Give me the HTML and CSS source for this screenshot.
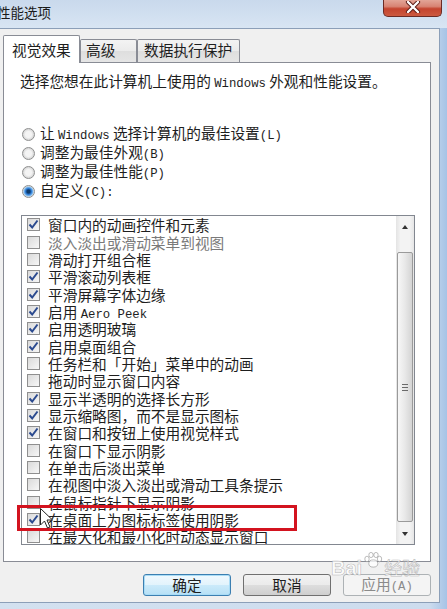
FILE: index.html
```html
<!DOCTYPE html>
<html lang="zh-CN">
<head>
  <meta charset="UTF-8" />
  <title>性能选项</title>
  <link rel="stylesheet" href="styles.css">
</head>
<body>
  <div class="window">
    <div class="titlebar">
      <span class="title">性能选项</span>
      <button class="close-btn" aria-label="关闭">
        <svg width="16" height="12" viewBox="0 0 16 12">
          <path d="M3 1 L13 11 M13 1 L3 11" stroke="#5a1a14" stroke-width="4.2" stroke-linecap="round"/>
          <path d="M3 1 L13 11 M13 1 L3 11" stroke="#fff" stroke-width="2.4" stroke-linecap="round"/>
        </svg>
      </button>
    </div>

    <div class="client">
      <div class="tabs">
        <div class="tab active">视觉效果</div>
        <div class="tab tab-adv">高级</div>
        <div class="tab tab-dep">数据执行保护</div>
      </div>

      <div class="panel">
        <p class="intro">选择您想在此计算机上使用的 <span class="en">Windows</span> 外观和性能设置。</p>

        <div class="radios">
          <label class="radio"><span class="radio-dot"></span><span class="label">让 <span class="en">Windows</span> 选择计算机的最佳设置<span class="en">(L)</span></span></label>
          <label class="radio"><span class="radio-dot"></span><span class="label">调整为最佳外观<span class="en">(B)</span></span></label>
          <label class="radio"><span class="radio-dot"></span><span class="label">调整为最佳性能<span class="en">(P)</span></span></label>
          <label class="radio"><span class="radio-dot checked"></span><span class="label">自定义<span class="en">(C):</span></span></label>
        </div>

        <div class="listbox">
          <ul class="items" id="items">
            <!-- JSで生成 -->
          </ul>
          <div class="scrollbar">
            <div class="sb-arrow"><span class="tri-up"></span></div>
            <div class="sb-thumb"><span class="grip"></span></div>
            <div class="sb-arrow sb-down"><span class="tri-down"></span></div>
          </div>
        </div>
      </div>

      <div class="buttons">
        <button class="btn btn-default">确定</button>
        <button class="btn">取消</button>
        <button class="btn btn-disabled">应用<span class="en">(A)</span></button>
      </div>
    </div>

    <!-- annotation overlays -->
    <div class="highlight"></div>
    <svg class="cursor" width="14" height="22" viewBox="0 0 14 22">
      <path d="M0.5 0.5 L0.5 17 L4.5 13 L7.5 20 L10 19 L7 12 L12.5 12 Z" fill="#fff" stroke="#222" stroke-width="1"/>
    </svg>
    <div class="watermark">
      <span class="wm-bai">Bai</span>
      <svg class="wm-paw" width="20" height="16" viewBox="0 0 20 16">
        <g fill="rgba(255,255,255,0.8)" stroke="rgba(110,110,110,0.45)" stroke-width="1">
          <ellipse cx="4" cy="7" rx="2.2" ry="2.8"/>
          <ellipse cx="8" cy="3" rx="2.2" ry="2.6"/>
          <ellipse cx="13" cy="3" rx="2.2" ry="2.6"/>
          <ellipse cx="16.5" cy="7" rx="2.2" ry="2.8"/>
          <ellipse cx="10.3" cy="11.5" rx="4.5" ry="3.6"/>
        </g>
      </svg>
      <span class="wm-jy">经验</span>
    </div>
  </div>

  <script>
    const options = [
      { label: '窗口内的动画控件和元素', on: true },
      { label: '淡入淡出或滑动菜单到视图', on: false, dim: true },
      { label: '滑动打开组合框', on: false },
      { label: '平滑滚动列表框', on: true },
      { label: '平滑屏幕字体边缘', on: true },
      { label: '启用 <span class="en">Aero Peek</span>', on: true },
      { label: '启用透明玻璃', on: true },
      { label: '启用桌面组合', on: true },
      { label: '任务栏和「开始」菜单中的动画', on: false },
      { label: '拖动时显示窗口内容', on: false },
      { label: '显示半透明的选择长方形', on: true },
      { label: '显示缩略图，而不是显示图标', on: true },
      { label: '在窗口和按钮上使用视觉样式', on: true },
      { label: '在窗口下显示阴影', on: false },
      { label: '在单击后淡出菜单', on: false },
      { label: '在视图中淡入淡出或滑动工具条提示', on: false },
      { label: '在鼠标指针下显示阴影', on: false },
      { label: '在桌面上为图标标签使用阴影', on: true },
      { label: '在最大化和最小化时动态显示窗口', on: false }
    ];

    const checkSvg = '<svg width="11" height="11" viewBox="0 0 11 11"><path d="M1.5 5.5 L4.2 8.5 L9.5 1.5" fill="none" stroke="#2b4a8f" stroke-width="2"/></svg>';
    const list = document.getElementById('items');

    options.forEach(opt => {
      const li = document.createElement('li');
      li.className = opt.dim ? 'item dim' : 'item';
      li.innerHTML = `<span class="check">${opt.on ? checkSvg : ''}</span><span class="label">${opt.label}</span>`;
      list.appendChild(li);
    });
  </script>
</body>
</html>
```

FILE: styles.css
```css
body {
  margin: 0;
  width: 447px;
  height: 609px;
  overflow: hidden;
  font-family: "Noto Sans CJK SC", sans-serif;
  font-size: 14.7px;
  color: #1e1e1e;
  background: #c4d8ee;
}
.en {
  font-family: "Liberation Mono", monospace;
  font-size: 12.3px;
}
.window {
  position: relative;
  width: 447px;
  height: 609px;
  background: linear-gradient(to right, #d3e1f0 0%, #cddcee 96%, #a6c3e6 100%);
}

/* title bar */
.titlebar {
  height: 28px;
  display: flex;
  justify-content: space-between;
  align-items: flex-start;
  background: linear-gradient(#c9d9ec, #d8e5f3);
}
.title {
  margin: 3px 0 0 -3px;
  font-size: 13.5px;
  line-height: 18px;
  color: #1a1a1a;
}
.close-btn {
  width: 59px;
  height: 17px;
  margin-right: 5px;
  padding: 0;
  display: flex;
  justify-content: center;
  align-items: flex-start;
  border: 1px solid #6b2b25;
  border-top: none;
  border-radius: 0 0 5px 5px;
  background: linear-gradient(#e2a597 0%, #d88474 40%, #c4442f 55%, #cc5a40 100%);
}
.close-btn svg {
  margin-top: 1px;
}

/* client area */
.client {
  width: 440px;
  height: 575px;
  box-sizing: border-box;
  border: 1px solid #8c9fb8;
  border-left: none;
  background: #f0f0f0;
  padding: 6px 0 0 3px;
}
.tabs {
  display: flex;
  align-items: flex-end;
  height: 27px;
  position: relative;
  z-index: 1;
}
.tab {
  box-sizing: border-box;
  height: 23px;
  border: 1px solid #898c95;
  border-bottom: none;
  border-radius: 2px 2px 0 0;
  background: linear-gradient(#f3f3f3, #ebebeb 50%, #dedede 51%, #e5e5e5);
  padding-left: 5px;
  line-height: 20px;
}
.tab.active {
  width: 77px;
  height: 28px;
  margin-bottom: -1px;
  background: #fff;
  padding-left: 8px;
  line-height: 28px;
}
.tab-adv {
  width: 57px;
}
.tab-dep {
  width: 103px;
  padding-left: 6px;
}
.panel {
  width: 428px;
  height: 500px;
  box-sizing: border-box;
  border: 1px solid #898c95;
  background: #fff;
  padding: 9px 0 0 16px;
}
.intro {
  margin: 0;
  line-height: 18px;
  white-space: nowrap;
}
.radios {
  margin: 32px 0 0 2px;
  display: flex;
  flex-direction: column;
}
.radio {
  display: flex;
  align-items: center;
  height: 19px;
  white-space: nowrap;
}
.radio .label {
  display: block;
  line-height: 19px;
}
.radio-dot {
  width: 13px;
  height: 13px;
  box-sizing: border-box;
  border-radius: 50%;
  border: 1px solid #8e8f8f;
  background: radial-gradient(circle, #f4f4f4 0 3px, #dcdcdc 5px);
  margin-right: 5px;
  flex-shrink: 0;
}
.radio-dot.checked {
  background: radial-gradient(circle, #0d3a6b 0 1.5px, #2c7ad3 3px, #86bff0 4.5px, #e6e6e6 5.5px);
}

/* list box */
.listbox {
  display: flex;
  width: 394px;
  height: 330px;
  box-sizing: border-box;
  margin: 14px 0 0 1px;
  border: 1px solid #828790;
  background: #fff;
}
.items {
  flex: 1;
  list-style: none;
  margin: 0;
  padding: 0 0 0 5px;
  overflow: hidden;
}
.item {
  display: flex;
  align-items: center;
  height: 17.35px;
  white-space: nowrap;
}
.item .label {
  display: block;
  height: 17px;
  line-height: 17px;
}
.item.dim .label {
  color: #7a7a7a;
}
.check {
  width: 13px;
  height: 13px;
  box-sizing: border-box;
  border: 1px solid #8f8f8f;
  background: linear-gradient(135deg, #dadada, #f7f7f7);
  margin-right: 8px;
  display: flex;
  justify-content: center;
  align-items: center;
  flex-shrink: 0;
}
.scrollbar {
  width: 18px;
  display: flex;
  flex-direction: column;
  background: linear-gradient(to right, #e4e4e4, #f3f3f3 25%, #f3f3f3 75%, #e6e6e6);
}
.sb-arrow {
  height: 22px;
  display: flex;
  justify-content: center;
  align-items: center;
}
.sb-down {
  margin-top: auto;
  height: 21px;
}
.tri-up, .tri-down {
  width: 0;
  height: 0;
  border-left: 3.5px solid transparent;
  border-right: 3.5px solid transparent;
}
.tri-up {
  border-bottom: 4px solid #333;
}
.tri-down {
  border-top: 4px solid #333;
}
.sb-thumb {
  margin: 14px 1px 0;
  height: 270px;
  box-sizing: border-box;
  border: 1px solid #9a9a9a;
  border-radius: 2px;
  background: linear-gradient(to right, #f7f7f7, #e8e8e8 50%, #d4d4d4);
  display: flex;
  justify-content: center;
  align-items: center;
}
.grip {
  width: 6px;
  height: 7px;
  background: repeating-linear-gradient(#6a6a6a 0 1px, transparent 1px 3px);
}

/* buttons */
.buttons {
  width: 428px;
  margin-top: 12px;
  display: flex;
  justify-content: flex-end;
  gap: 12px;
}
.btn {
  width: 88px;
  height: 22px;
  padding: 0;
  font-family: inherit;
  font-size: 14.7px;
  line-height: 18px;
  color: #1e1e1e;
  border: 1px solid #707070;
  border-radius: 3px;
  background: linear-gradient(#f2f2f2, #ebebeb 50%, #dddddd 51%, #cfcfcf);
}
.btn-default {
  border-color: #3c7fb1;
  box-shadow: inset 0 0 0 1px #a9dcf6;
  background: linear-gradient(#f0f9fe, #e2f3fc 50%, #cbeafa 51%, #b6e0f6);
}
.btn-disabled {
  color: #8a8a8a;
  border-color: #adb2b5;
  background: #f4f4f4;
}

/* overlays */
.highlight {
  position: absolute;
  left: 17px;
  top: 505px;
  width: 280px;
  height: 26px;
  box-sizing: border-box;
  border: 3px solid #d3131f;
}
.cursor {
  position: absolute;
  left: 40px;
  top: 508px;
}
.watermark {
  position: absolute;
  left: 331px;
  top: 552px;
  display: flex;
  align-items: flex-end;
  gap: 1px;
  color: rgba(255, 255, 255, 0.8);
  -webkit-text-stroke: 0.6px rgba(110, 110, 110, 0.45);
}
.wm-bai {
  font-family: "Liberation Sans", sans-serif;
  font-weight: bold;
  font-size: 20px;
  line-height: 26px;
}
.wm-paw {
  margin-bottom: 13px;
}
.wm-jy {
  font-size: 18px;
  line-height: 28px;
}
```
